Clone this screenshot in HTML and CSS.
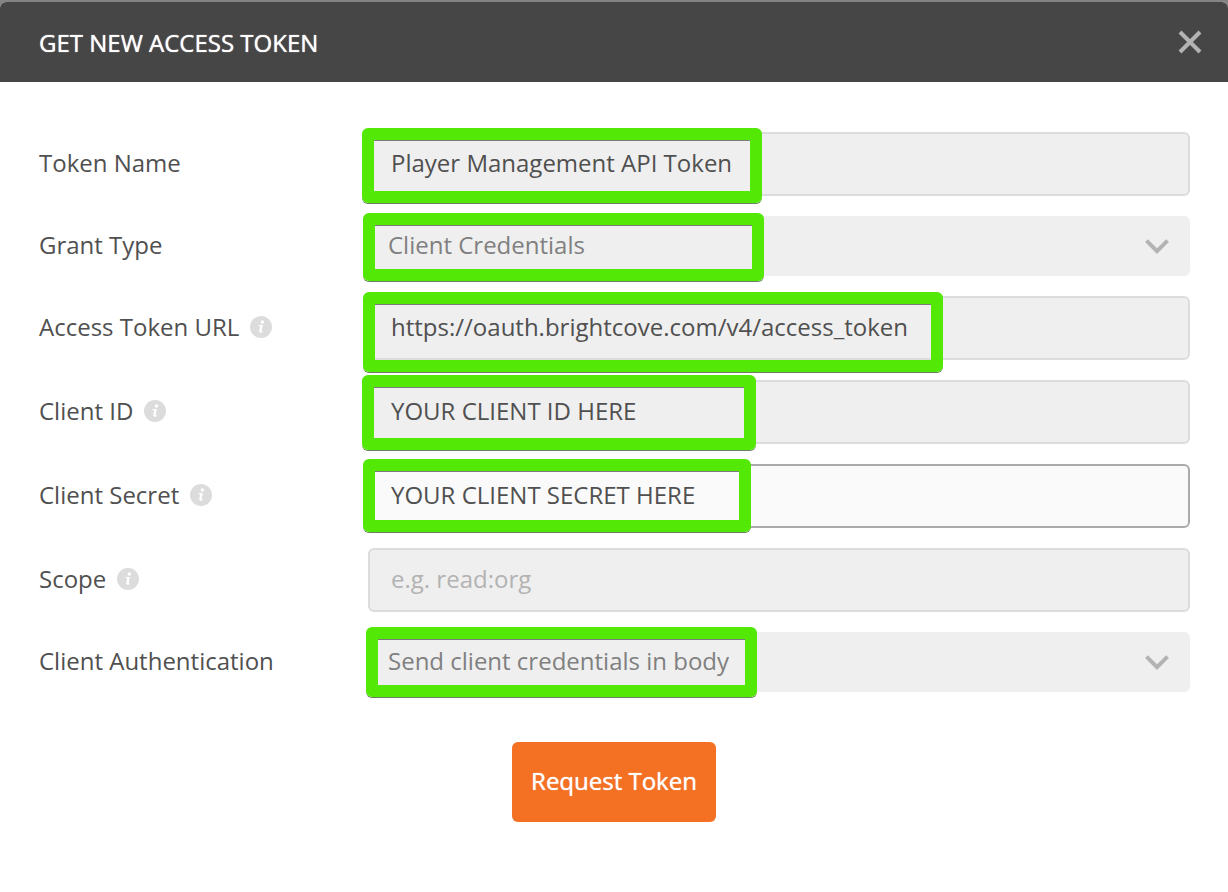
FILE: index.html
```html
<!DOCTYPE html>
<html lang="en">
<head>
<meta charset="utf-8">
<meta name="viewport" content="width=device-width, initial-scale=1">
<title>Get new access token</title>
<link rel="stylesheet" href="styles.css">
</head>
<body>
<svg class="sprite" aria-hidden="true">
  <symbol id="info" viewBox="0 0 22 22">
    <circle cx="11" cy="11" r="11" fill="#dcdcdc"/>
    <circle cx="12.4" cy="6" r="1.7" fill="#fff"/>
    <path d="M8.6 9.6h3.2l-1.3 5.9q-.2 1 .6.7l1.5-.7" fill="none" stroke="#fff" stroke-width="1.3"/>
    <path d="M11.6 9.3l-1.5 6.6" fill="none" stroke="#fff" stroke-width="2.2"/>
  </symbol>
  <symbol id="chevron" viewBox="0 0 24 16">
    <path d="M1.5 1.7L12 12.2L22.5 1.7" fill="none" stroke="#b3b3b3" stroke-width="4"/>
  </symbol>
</svg>
<div class="dialog" role="dialog" aria-labelledby="title">
  <header class="dialog-header">
    <h1 class="dialog-title" id="title">GET NEW ACCESS TOKEN</h1>
    <button class="close" type="button" aria-label="Close">
      <svg class="close-icon" viewBox="0 0 24 24"><path d="M2 2L22 22M22 2L2 22" fill="none" stroke="#b3b3b3" stroke-width="4"/></svg>
    </button>
  </header>
  <form class="form">
    <div class="row">
      <label class="label" for="name">Token Name</label>
      <div class="field">
        <input class="input" id="name" type="text" value="Player Management API Token">
        <span class="mark mark-name"></span>
      </div>
    </div>
    <div class="row">
      <label class="label" for="grant">Grant Type</label>
      <div class="field">
        <select class="select" id="grant"><option>Client Credentials</option></select>
        <svg class="chevron"><use href="#chevron"/></svg>
        <span class="mark mark-grant"></span>
      </div>
    </div>
    <div class="row">
      <label class="label" for="url">Access Token URL <svg class="info"><use href="#info"/></svg></label>
      <div class="field">
        <input class="input" id="url" type="text" value="https://oauth.brightcove.com/v4/access_token">
        <span class="mark mark-url"></span>
      </div>
    </div>
    <div class="row">
      <label class="label" for="client">Client ID <svg class="info"><use href="#info"/></svg></label>
      <div class="field">
        <input class="input" id="client" type="text" value="YOUR CLIENT ID HERE">
        <span class="mark mark-client"></span>
      </div>
    </div>
    <div class="row">
      <label class="label" for="secret">Client Secret <svg class="info"><use href="#info"/></svg></label>
      <div class="field">
        <input class="input input-active" id="secret" type="text" value="YOUR CLIENT SECRET HERE">
        <span class="mark mark-secret"></span>
      </div>
    </div>
    <div class="row">
      <label class="label" for="scope">Scope <svg class="info"><use href="#info"/></svg></label>
      <div class="field">
        <input class="input" id="scope" type="text" placeholder="e.g. read:org">
      </div>
    </div>
    <div class="row">
      <label class="label" for="auth">Client Authentication</label>
      <div class="field">
        <select class="select" id="auth"><option>Send client credentials in body</option></select>
        <svg class="chevron"><use href="#chevron"/></svg>
        <span class="mark mark-auth"></span>
      </div>
    </div>
    <button class="submit" type="button">Request Token</button>
  </form>
</div>
</body>
</html>
```

FILE: styles.css
```css
* {
  box-sizing: border-box;
}

body {
  margin: 0;
  padding-top: 2px;
  min-height: 100vh;
  display: flex;
  background: #848484;
  font-family: "Open Sans", "Noto Sans", sans-serif;
  font-size: 24px;
  line-height: 32px;
  color: #505050;
}

.sprite {
  position: absolute;
  width: 0;
  height: 0;
}

.dialog {
  flex: 1;
  background: #fff;
  border-radius: 6px 6px 0 0;
  overflow: hidden;
}

.dialog-header {
  display: flex;
  align-items: center;
  justify-content: space-between;
  height: 80px;
  padding: 0 26px 0 39px;
  background: #464646;
}

.dialog-title {
  margin: 0;
  padding-top: 2px;
  font-size: 24px;
  font-weight: 400;
  color: #fff;
  text-shadow: 0 0 1px #fff;
}

.close {
  display: flex;
  padding: 0;
  border: 0;
  background: none;
}

.close-icon {
  width: 24px;
  height: 24px;
}

.form {
  display: flex;
  flex-direction: column;
  gap: 20px;
  padding: 50px 38px;
}

.row {
  display: grid;
  grid-template-columns: 330px 1fr;
  align-items: center;
}

.label {
  display: flex;
  align-items: center;
  gap: 11px;
  padding: 0 0 2px 1px;
}

.info {
  width: 22px;
  height: 22px;
}

.field {
  position: relative;
}

.input,
.select {
  display: block;
  width: 100%;
  border-radius: 6px;
  background: #efefef;
  font: inherit;
  appearance: none;
  outline: 0;
}

.input {
  height: 64px;
  padding: 0 21px 4px;
  border: 2px solid #dcdcdc;
  color: #505050;
}

.input::placeholder {
  color: #b3b3b3;
  opacity: 1;
}

.input-active {
  border-color: #aaa;
  background: #fafafa;
}

.select {
  height: 60px;
  padding: 0 60px 2px 20px;
  border: 0;
  color: #808080;
}

.chevron {
  position: absolute;
  top: 23px;
  right: 21px;
  width: 24px;
  height: 16px;
  pointer-events: none;
}

/* Highlighter frames drawn over the fields */
.mark {
  position: absolute;
  border: 12px solid #53e805;
  border-radius: 6px;
  box-shadow: 0 1px 0 #6b8062, inset 0 1px 0 #7b7b7b;
  pointer-events: none;
}

.mark-name {
  top: -4px;
  left: -6px;
  width: 400px;
  height: 75px;
}

.mark-grant {
  top: -3px;
  left: -5px;
  width: 401px;
  height: 68px;
}

.mark-url {
  top: -4px;
  left: -5px;
  width: 580px;
  height: 80px;
}

.mark-client {
  top: -5px;
  left: -6px;
  width: 394px;
  height: 75px;
}

.mark-secret {
  top: -5px;
  left: -5px;
  width: 388px;
  height: 73px;
}

.mark-auth {
  top: -5px;
  left: -2px;
  width: 391px;
  height: 70px;
}

.submit {
  align-self: center;
  margin-top: 30px;
  height: 80px;
  padding: 0 19px 2px;
  border: 0;
  border-radius: 6px;
  background: #f47023;
  font: inherit;
  color: #fff;
  text-shadow: 0 0 1px #fff;
}
```
